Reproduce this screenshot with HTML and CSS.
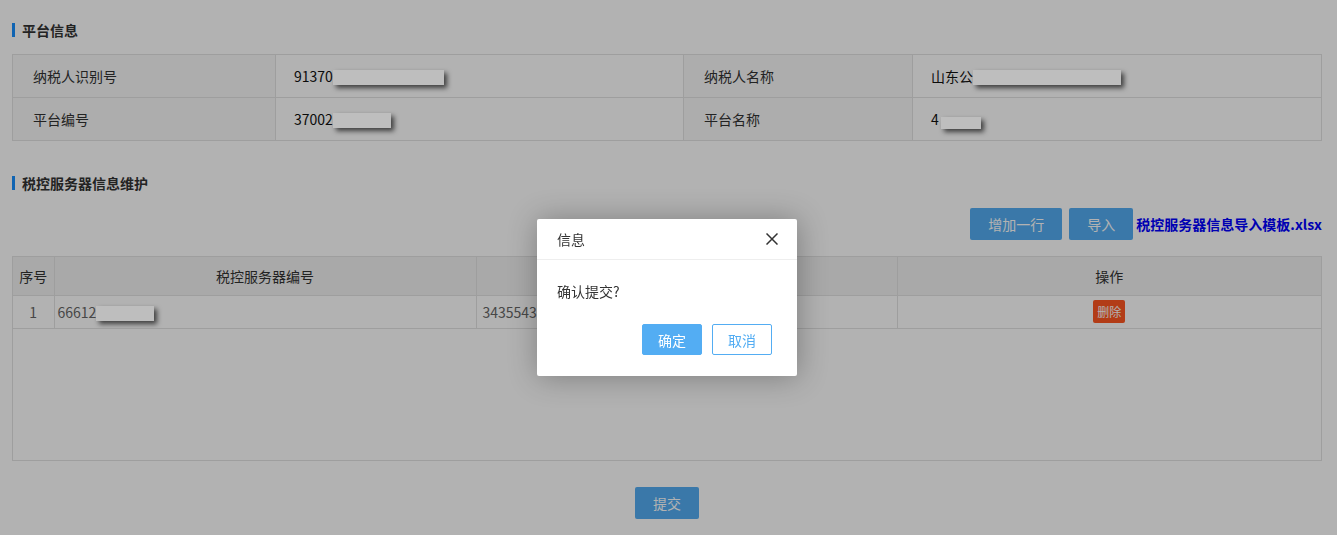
FILE: index.html
```html
<!DOCTYPE html>
<html lang="zh-CN">
<head>
    <meta charset="UTF-8">
    <meta name="viewport" content="width=device-width, initial-scale=1.0">
    <title>税控服务器信息维护</title>
    <link rel="stylesheet" href="styles.css">
</head>
<body>
    <div class="page">
        <h3 class="block-title">平台信息</h3>
        <table class="info-table">
            <colgroup>
                <col style="width: 263px">
                <col style="width: 408px">
                <col style="width: 229px">
                <col>
            </colgroup>
            <tr>
                <td class="label">纳税人识别号</td>
                <td class="value">91370<span class="mask" style="width: 111px"></span></td>
                <td class="label">纳税人名称</td>
                <td class="value">山东公<span class="mask" style="width: 148px"></span></td>
            </tr>
            <tr>
                <td class="label">平台编号</td>
                <td class="value">37002<span class="mask" style="width: 58px"></span></td>
                <td class="label">平台名称</td>
                <td class="value">4<span class="mask small" style="width: 40px"></span></td>
            </tr>
        </table>

        <h3 class="block-title second">税控服务器信息维护</h3>
        <div class="toolbar">
            <button class="btn">增加一行</button>
            <button class="btn">导入</button>
            <a class="template-link" href="#">税控服务器信息导入模板.xlsx</a>
        </div>

        <div class="grid-box">
            <table class="grid">
                <colgroup>
                    <col style="width: 41px">
                    <col style="width: 422px">
                    <col style="width: 421px">
                    <col>
                </colgroup>
                <thead>
                    <tr>
                        <th>序号</th>
                        <th>税控服务器编号</th>
                        <th>税控服务器口令</th>
                        <th>操作</th>
                    </tr>
                </thead>
                <tbody>
                    <tr>
                        <td class="center">1</td>
                        <td>66612<span class="mask" style="width: 58px"></span></td>
                        <td>3435543</td>
                        <td class="center"><button class="btn-danger">删除</button></td>
                    </tr>
                </tbody>
            </table>
        </div>

        <div class="submit-row">
            <button class="btn">提交</button>
        </div>
    </div>

    <div class="shade"></div>
    <div class="dialog">
        <div class="dialog-title">
            <span>信息</span>
            <svg class="dialog-close" width="12" height="12" viewBox="0 0 12 12">
                <path d="M0.5 0.5 L11.5 11.5 M11.5 0.5 L0.5 11.5" stroke="#333" stroke-width="1.5" fill="none"/>
            </svg>
        </div>
        <div class="dialog-body">确认提交?</div>
        <div class="dialog-btns">
            <button class="dlg-btn ok">确定</button>
            <button class="dlg-btn cancel">取消</button>
        </div>
    </div>
</body>
</html>
```

FILE: styles.css
```css
* {
    box-sizing: border-box;
}

body {
    margin: 0;
    font-family: "Microsoft YaHei", "Noto Sans CJK SC", sans-serif;
    font-size: 14px;
    color: #333;
    background: #fff;
}

.page {
    padding: 0 15px 0 12px;
}

.block-title {
    margin: 23px 0 0 0;
    height: 14px;
    line-height: 14px;
    font-size: 14px;
    font-weight: bold;
    color: #333;
    border-left: 3px solid #1890ff;
    padding-left: 7px;
}

.block-title.second {
    margin-top: 35px;
}

.info-table {
    width: 100%;
    margin-top: 17px;
    table-layout: fixed;
    border-collapse: collapse;
    border: 1px solid #e2e2e2;
}

.info-table td {
    height: 43px;
    border: 1px solid #e2e2e2;
    padding: 0 18px;
    white-space: nowrap;
    overflow: hidden;
}

.info-table td.label {
    background: #f8f8f8;
    padding-left: 20px;
    color: #333;
}

.info-table td.value {
    color: #111;
}

.mask {
    position: relative;
    z-index: 15;
    display: inline-block;
    height: 15px;
    vertical-align: -3px;
    background: #bebebe;
    box-shadow: 3px 3px 5px rgba(0, 0, 0, 0.65);
}

.mask.small {
    height: 12px;
    vertical-align: -4px;
    margin-left: 2px;
}

.toolbar {
    display: flex;
    justify-content: flex-end;
    align-items: center;
    margin-top: 18px;
    height: 32px;
}

.btn {
    height: 32px;
    padding: 0 18px;
    border: none;
    border-radius: 2px;
    background: #53adf3;
    color: #fff;
    font-family: inherit;
    font-size: 14px;
    cursor: pointer;
}

.toolbar .btn {
    margin-right: 7px;
}

.toolbar .btn + .btn {
    margin-right: 3px;
}

.template-link {
    color: #00f;
    font-weight: bold;
    text-decoration: none;
}

.grid-box {
    margin-top: 16px;
    height: 205px;
    border: 1px solid #e2e2e2;
}

.grid {
    width: 100%;
    table-layout: fixed;
    border-collapse: collapse;
}

.grid th {
    height: 38px;
    background: #f2f2f2;
    font-weight: normal;
    color: #333;
    border-right: 1px solid #e2e2e2;
    border-bottom: 1px solid #e2e2e2;
}

.grid td {
    height: 33px;
    padding: 0 3px;
    color: #666;
    border-right: 1px solid #e2e2e2;
    border-bottom: 1px solid #e2e2e2;
    white-space: nowrap;
    overflow: hidden;
}

.grid td.center {
    text-align: center;
}

.grid th:last-child,
.grid td:last-child {
    border-right: none;
}

.grid td:nth-child(3) {
    padding-left: 6px;
}

.btn-danger {
    height: 23px;
    padding: 0 4px;
    border: none;
    border-radius: 2px;
    background: #ff5722;
    color: #fff;
    font-family: inherit;
    font-size: 12px;
    vertical-align: middle;
}

.submit-row {
    display: flex;
    justify-content: center;
    margin-top: 26px;
    padding-bottom: 20px;
}

.submit-row .btn {
    width: 64px;
    padding: 0;
}

.shade {
    position: fixed;
    top: 0;
    left: 0;
    right: 0;
    bottom: 0;
    z-index: 10;
    background: rgba(0, 0, 0, 0.3);
}

.dialog {
    position: fixed;
    top: 219px;
    left: 537px;
    z-index: 20;
    width: 260px;
    background: #fff;
    border-radius: 2px;
    box-shadow: 1px 1px 30px rgba(0, 0, 0, 0.3);
}

.dialog-title {
    display: flex;
    justify-content: space-between;
    align-items: center;
    height: 41px;
    padding: 0 19px 0 20px;
    border-bottom: 1px solid #eee;
    color: #333;
    font-size: 14px;
}

.dialog-body {
    padding: 19px 20px 0 20px;
    line-height: 24px;
    color: #333;
}

.dialog-btns {
    display: flex;
    justify-content: flex-end;
    gap: 10px;
    padding: 21px 25px 21px 0;
}

.dlg-btn {
    width: 60px;
    height: 31px;
    border-radius: 2px;
    font-family: inherit;
    font-size: 14px;
    cursor: pointer;
}

.dlg-btn.ok {
    border: 1px solid #53adf3;
    background: #53adf3;
    color: #fff;
}

.dlg-btn.cancel {
    border: 1px solid #53adf3;
    background: #fff;
    color: #53adf3;
}
```
